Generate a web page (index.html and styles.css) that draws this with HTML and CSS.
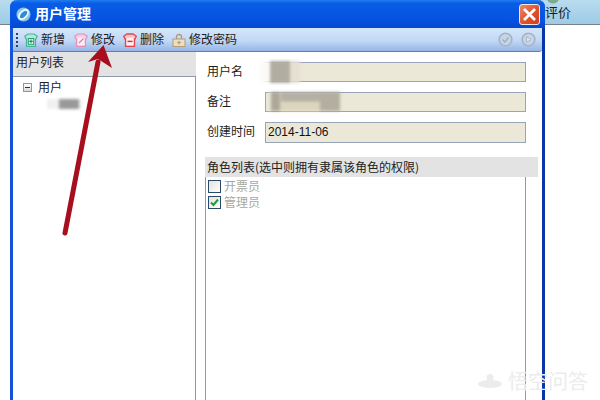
FILE: index.html
```html
<!DOCTYPE html>
<html lang="zh-CN">
  <head>
    <meta charset="UTF-8" />
    <meta name="viewport" content="width=device-width, initial-scale=1.0" />
    <title>用户管理</title>
    <link rel="stylesheet" href="styles.css">
  </head>
  <body>
    <div class="desktop">
      <div class="back-bar"><span class="back-text">评价</span></div>

      <div class="window">
        <div class="titlebar">
          <svg class="title-icon" width="15" height="15" viewBox="0 0 15 15">
            <circle cx="7.5" cy="7.5" r="7" fill="#8cc6ec" />
            <ellipse cx="7.5" cy="7.5" rx="5.6" ry="3.2" transform="rotate(-45 7.5 7.5)" fill="#2f8fd6" stroke="#f4fbff" stroke-width="1.8" />
          </svg>
          <span class="title-text">用户管理</span>
          <div class="close-btn">
            <svg width="15" height="15" viewBox="0 0 15 15">
              <path d="M2 2 L13 13 M13 2 L2 13" stroke="#fff" stroke-width="2.8" />
            </svg>
          </div>
        </div>

        <div class="toolbar">
          <div class="grip"></div>
          <div class="tool tool-first">
            <svg width="14" height="14" viewBox="0 0 14 14">
              <path d="M4 1 H10 L13.3 3.2 L12 6 H11.5 V13.3 H2.5 V6 H2 L0.7 3.2 Z" fill="#b6e6d4" stroke="#45b596" stroke-width="1.2" />
              <rect x="4.3" y="5.5" width="5.4" height="5.8" fill="#e8f8f2" stroke="#2a9e7c" />
              <path d="M7 6.5 V10.3 M5.2 8.4 H8.8" stroke="#1c8f6c" stroke-width="1.1" />
            </svg>
            <span>新增</span>
          </div>
          <div class="tool">
            <svg width="14" height="14" viewBox="0 0 14 14">
              <path d="M4 1 H10 L13.3 3.2 L12 6 H11.5 V13.3 H2.5 V6 H2 L0.7 3.2 Z" fill="#f3cfe2" stroke="#e58fbc" stroke-width="1.2" />
              <rect x="3.6" y="4.6" width="6.8" height="7.6" fill="#fbeef5" />
              <path d="M5 10 L9.5 5.5" stroke="#dd7fb0" stroke-width="1.3" />
            </svg>
            <span>修改</span>
          </div>
          <div class="tool">
            <svg width="14" height="14" viewBox="0 0 14 14">
              <path d="M4 1 H10 L13.3 3.2 L12 6 H11.5 V13.3 H2.5 V6 H2 L0.7 3.2 Z" fill="#f7c4c8" stroke="#e5434f" stroke-width="1.3" />
              <rect x="3.6" y="4.6" width="6.8" height="7.6" fill="#fdf1f1" />
              <path d="M4.5 8.4 H9.5" stroke="#e02e3c" stroke-width="1.5" />
            </svg>
            <span>删除</span>
          </div>
          <div class="tool">
            <svg width="14" height="14" viewBox="0 0 14 14">
              <path d="M4.5 6 V3.5 C4.5 0.8 9.5 0.8 9.5 3.5 V6" fill="none" stroke="#b09a78" stroke-width="1.3" />
              <rect x="1" y="6" width="12" height="7.5" fill="#eadfc4" stroke="#b39b74" />
              <path d="M7 8 V11.5 M5.2 9.5 H8.8" stroke="#b29a70" stroke-width="1.2" />
            </svg>
            <span>修改密码</span>
          </div>
          <div class="tool-right">
            <svg width="15" height="15" viewBox="0 0 15 15">
              <circle cx="7.5" cy="7.5" r="6.3" fill="#c6d5e8" stroke="#a4b2c4" stroke-width="1.6" />
              <path d="M4.5 7.5 L6.8 10 L10.5 5.5" fill="none" stroke="#a4b2c4" stroke-width="1.6" />
            </svg>
            <svg width="15" height="15" viewBox="0 0 15 15">
              <circle cx="7.5" cy="7.5" r="6.3" fill="#c6d5e8" stroke="#a4b2c4" stroke-width="1.6" />
              <path d="M5.5 4.5 L10 7.5 L5.5 10.5 Z" fill="#dde7f4" stroke="#aab8ca" />
            </svg>
          </div>
        </div>

        <div class="content">
          <div class="side">
            <div class="side-head">用户列表</div>
            <div class="tree">
              <div class="tree-row">
                <span class="expander"></span>
                <span class="tree-label">用户</span>
              </div>
              <div class="tree-child"><span class="smudge smudge-tree"></span></div>
            </div>
          </div>

          <div class="main">
            <div class="form-row">
              <label>用户名</label>
              <div class="field"><span class="smudge smudge-name"></span></div>
            </div>
            <div class="form-row">
              <label>备注</label>
              <div class="field"><span class="smudge smudge-note"></span></div>
            </div>
            <div class="form-row">
              <label>创建时间</label>
              <div class="field field-date">2014-11-06</div>
            </div>

            <div class="roles-head">角色列表(选中则拥有隶属该角色的权限)</div>
            <div class="roles">
              <div class="role">
                <span class="check"></span>
                <span>开票员</span>
              </div>
              <div class="role">
                <span class="check">
                  <svg width="11" height="11" viewBox="0 0 11 11">
                    <path d="M2 5.5 L4.5 8 L9 2.5" fill="none" stroke="#1f9a3c" stroke-width="2" />
                  </svg>
                </span>
                <span>管理员</span>
              </div>
            </div>
          </div>
        </div>
      </div>

      <svg class="arrow" width="600" height="400" viewBox="0 0 600 400">
        <path d="M65 233 L98 62" stroke="#a80f1e" stroke-width="5" stroke-linecap="round" />
        <path d="M103.5 45 L88 62 L98 59 L112 68 Z" fill="#a80f1e" />
      </svg>

      <div class="watermark">
        <svg width="26" height="16" viewBox="0 0 26 16">
          <ellipse cx="13" cy="11" rx="12" ry="4" fill="#ececec" />
          <circle cx="13" cy="4.5" r="3.5" fill="#ececec" />
        </svg>
        <span>悟空问答</span>
      </div>
    </div>
  </body>
</html>
```

FILE: styles.css
```css
* {
  box-sizing: border-box;
}

body {
  margin: 0;
  background-color: #fff;
  font-family: "Noto Sans CJK SC", "Liberation Sans", sans-serif;
  font-size: 12px;
  color: #222;
}

.desktop {
  position: relative;
  width: 600px;
  height: 400px;
  overflow: hidden;
}

.back-bar {
  height: 25px;
  padding-left: 545px;
  line-height: 23px;
  font-size: 13px;
  color: #1a1a1a;
  background:
    radial-gradient(circle at 553px -3px, #7fa88c 0 6px, transparent 7px),
    linear-gradient(#b9dcef, #9dcbe6);
  border-bottom: 1px solid #77808a;
}

/* the dialog sits on top of the app behind it */
.window {
  position: absolute;
  left: 10px;
  top: 0;
  width: 535px;
  height: 400px;
  display: flex;
  flex-direction: column;
  background-color: #fff;
  border-left: 3px solid #1554d8;
  border-right: 3px solid #0a35a8;
  border-radius: 7px 7px 0 0;
}

.titlebar {
  height: 28px;
  margin: 0 -3px;
  padding: 0 5px 0 6px;
  display: flex;
  align-items: center;
  background: linear-gradient(#1f7df0 0, #0a5ce6 12%, #0553e0 70%, #0648d0 100%);
  border-radius: 7px 7px 0 0;
}

.title-icon {
  flex: none;
}

.title-text {
  margin: -2px 0 0 4px;
  font-size: 14px;
  font-weight: bold;
  color: #fff;
}

.close-btn {
  margin-left: auto;
  width: 21px;
  height: 21px;
  display: flex;
  align-items: center;
  justify-content: center;
  background: linear-gradient(135deg, #ee8a6c, #e0502a 55%, #d0401e);
  border: 1px solid #f3e9e4;
  border-radius: 3px;
}

.toolbar {
  height: 24px;
  padding-left: 3px;
  display: flex;
  align-items: center;
  background: linear-gradient(#d5e6fb, #c2d8f5 55%, #96b6e6);
  border-bottom: 1px solid #5f7fb0;
  border-radius: 0 0 3px 0;
}

.grip {
  width: 2px;
  height: 14px;
  margin-right: 6px;
  background: repeating-linear-gradient(#2a3f66 0 2px, transparent 2px 4px);
}

.tool {
  display: flex;
  align-items: center;
  gap: 3px;
  margin-right: 8px;
  white-space: nowrap;
  color: #1c1c1c;
}

.tool span {
  margin-top: -2px;
}

.tool-first {
  margin-right: 9px;
}

.tool-right {
  margin-left: auto;
  margin-right: 6px;
  display: flex;
  gap: 8px;
}

.content {
  flex: 1;
  display: flex;
  min-height: 0;
}

.side {
  width: 183px;
  display: flex;
  flex-direction: column;
}

.side-head {
  height: 24px;
  padding: 1px 0 0 3px;
  line-height: 18px;
  background-color: #e3e3e3;
}

.tree {
  flex: 1;
  padding: 2px 0 0 10px;
  background-color: #fff;
  border-top: 1px solid #8d9aab;
  border-right: 1px solid #8d9aab;
}

.tree-row {
  display: flex;
  align-items: center;
  gap: 6px;
  height: 17px;
}

.tree-label {
  margin-top: -2px;
}

.expander {
  position: relative;
  width: 9px;
  height: 9px;
  border: 1px solid #8c96a4;
  background: linear-gradient(#fff, #d9d9d9);
}

.expander::after {
  content: "";
  position: absolute;
  left: 1px;
  top: 3px;
  width: 5px;
  height: 1px;
  background-color: #333;
}

.tree-child {
  padding-left: 24px;
  height: 17px;
}

.smudge {
  display: block;
  filter: blur(1.5px);
}

.smudge-tree {
  width: 34px;
  height: 10px;
  margin-top: 3px;
  background: linear-gradient(90deg, #f0f0f0 0 35%, #999 35% 95%, #eee 95%);
}

.main {
  flex: 1;
  padding: 10px 4px 0 9px;
  display: flex;
  flex-direction: column;
}

.form-row {
  display: flex;
  align-items: center;
  height: 20px;
  margin-bottom: 10px;
}

.form-row label {
  width: 60px;
  flex: none;
  padding: 0 0 3px 2px;
  color: #1c1c1c;
}

.field {
  width: 261px;
  height: 20px;
  padding-left: 2px;
  line-height: 18px;
  background-color: #ebe8d8;
  border: 1px solid #9aa4b8;
}

.field-date {
  font-family: "Liberation Sans", sans-serif;
  font-size: 12px;
  height: 21px;
  color: #111;
}

.smudge-name {
  width: 40px;
  height: 22px;
  margin: -2px 0 0 -8px;
  background: linear-gradient(90deg, #fbfaf6 0 25%, #b2ada1 25% 75%, #e4e0d2 75%);
}

.smudge-note {
  width: 72px;
  height: 19px;
  margin: -1px 0 0 0;
  background:
    linear-gradient(90deg, transparent 0 18%, #b4b0a2 18% 72%, transparent 72%) top / 100% 50% no-repeat,
    linear-gradient(90deg, #e8e5d6 0 4%, #aca89a 4% 17%, #dcd6be 17% 72%, #b2aea0 72%);
}

.roles-head {
  width: 333px;
  height: 20px;
  margin-top: 5px;
  padding-left: 2px;
  line-height: 20px;
  background-color: #e3e3e3;
}

.roles {
  width: 321px;
  flex: 1;
  padding-top: 1px;
  border-left: 1px solid #8d9aab;
  border-right: 1px solid #8d9aab;
}

.role {
  display: flex;
  align-items: center;
  gap: 3px;
  height: 16px;
  padding-left: 2px;
  line-height: 14px;
  color: #a8a8a0;
}

.check {
  width: 13px;
  height: 13px;
  display: flex;
  align-items: center;
  justify-content: center;
  background: linear-gradient(135deg, #e4e2da, #fff);
  border: 1px solid #2a4a6c;
}

.arrow {
  position: absolute;
  left: 0;
  top: 0;
}

.watermark {
  position: absolute;
  left: 477px;
  top: 366px;
  display: flex;
  align-items: center;
  gap: 5px;
  font-size: 20px;
  color: #ececec;
}
```
